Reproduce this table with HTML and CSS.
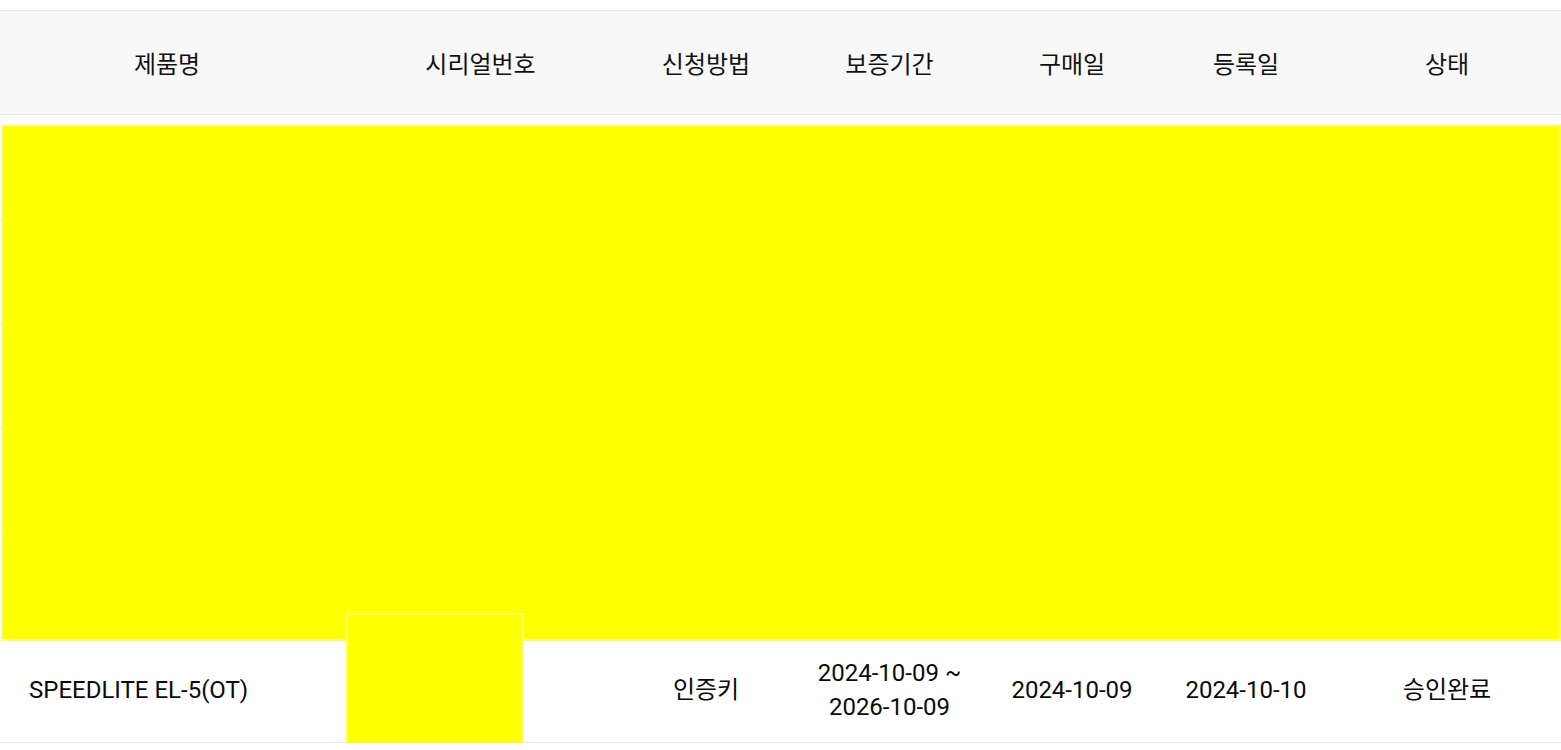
FILE: index.html
```html
<!DOCTYPE html>
<html lang="ko">
<head>
<meta charset="utf-8">
<title>제품 등록 내역</title>
<link rel="stylesheet" href="styles.css">
</head>
<body>
<div class="wrap">
  <table class="list">
    <colgroup>
      <col class="c1"><col class="c2"><col class="c3"><col class="c4"><col class="c5"><col class="c6"><col class="c7">
    </colgroup>
    <thead>
      <tr>
        <th>제품명</th><th>시리얼번호</th><th>신청방법</th><th>보증기간</th><th>구매일</th><th>등록일</th><th>상태</th>
      </tr>
    </thead>
    <tbody>
      <tr><td></td><td></td><td></td><td></td><td></td><td></td><td></td></tr>
      <tr><td></td><td></td><td></td><td></td><td></td><td></td><td></td></tr>
      <tr><td></td><td></td><td></td><td></td><td></td><td></td><td></td></tr>
      <tr><td></td><td></td><td></td><td></td><td></td><td></td><td></td></tr>
      <tr><td></td><td></td><td></td><td></td><td></td><td></td><td></td></tr>
      <tr>
        <td class="name">SPEEDLITE EL-5(OT)</td>
        <td></td>
        <td>인증키</td>
        <td>2024-10-09 ~<br>2026-10-09</td>
        <td>2024-10-09</td>
        <td>2024-10-10</td>
        <td>승인완료</td>
      </tr>
    </tbody>
  </table>
  <div class="mask mask-rows"></div>
  <div class="mask mask-serial"></div>
</div>
</body>
</html>
```

FILE: styles.css
```css
html, body {
  margin: 0;
  padding: 0;
  background: #ffffff;
}

body {
  font-family: Roboto, "Noto Sans CJK KR", "Noto Sans", sans-serif;
  color: #0a0a0a;
  overflow: hidden;
}

.wrap {
  position: relative;
  padding-top: 10px;
  width: 1561px;
}

.list {
  width: 1561px;
  table-layout: fixed;
  border-collapse: collapse;
  border-top: 1px solid #e3e3e3;
}

.c1 { width: 334px; }
.c2 { width: 293px; }
.c3 { width: 158px; }
.c4 { width: 209px; }
.c5 { width: 156px; }
.c6 { width: 192px; }
.c7 { width: 219px; }

.list th {
  height: 103px;
  padding: 0;
  background: #f8f8f8;
  border-bottom: 1px solid #e3e3e3;
  font-size: 24px;
  font-weight: 400;
  color: #111111;
  text-align: center;
  vertical-align: middle;
}

.list td {
  height: 103.67px;
  padding: 0;
  border-bottom: 1px solid #e6e6e6;
  font-size: 24px;
  line-height: 34px;
  text-align: center;
  vertical-align: middle;
  color: #0a0a0a;
}

.list td.name {
  text-align: left;
  padding-left: 29px;
}

.list th:last-child,
.list td:last-child {
  padding-right: 9px;
}

.mask {
  position: absolute;
  background: #ffff00;
  box-sizing: border-box;
  border: 2px solid #ffff5a;
}

.mask-rows {
  left: 1px;
  top: 125px;
  width: 1560px;
  height: 516px;
}

.mask-serial {
  left: 346px;
  top: 613px;
  width: 178px;
  height: 136px;
}
```
